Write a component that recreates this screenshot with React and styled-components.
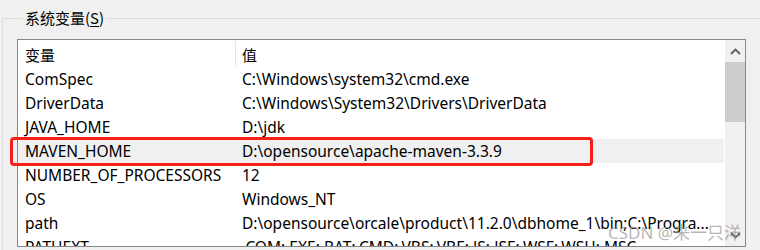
import React from "react";
import styled, { createGlobalStyle } from "styled-components";

const Global = createGlobalStyle`
  html, body { margin: 0; padding: 0; background: #f0f0f0; overflow: hidden; }
  body { font-family: "Noto Sans", "Noto Sans CJK SC", sans-serif; }
`;

const Page = styled.div`
  position: relative;
  width: 760px;
  height: 250px;
  overflow: hidden;
  background: #f0f0f0;
`;

const Group = styled.fieldset`
  margin: 0 0 0 2px;
  padding: 0 0 0 14px;
  border: 1px solid #dcdcdc;
  border-right: none;
  border-bottom: none;
  height: 260px;
  position: relative;
  top: 8px;
`;

const Legend = styled.legend`
  margin-left: 6px;
  padding: 0 2px;
  font-family: "Noto Sans CJK SC", sans-serif;
  font-size: 15px;
  line-height: 20px;
  color: #000;
  u { text-decoration: underline; text-underline-offset: 2px; }
`;

const ListBox = styled.div`
  margin-top: 11px;
  width: 727px;
  height: 206px;
  border: 1px solid #828790;
  background: #fff;
  display: flex;
  overflow: hidden;
`;

const Table = styled.div`
  flex: 1;
  display: flex;
  flex-direction: column;
  padding-right: 1px;
`;

const Header = styled.div`
  display: grid;
  grid-template-columns: 217px 1px 1fr;
  height: 27px;
  align-items: center;
  flex-shrink: 0;
`;

const HeadCell = styled.div`
  font-family: "Noto Sans CJK SC", sans-serif;
  font-size: 15px;
  padding-left: ${(p) => p.$pad}px;
  color: #000;
  padding-top: 2px;
`;

const Divider = styled.div`
  align-self: stretch;
  margin: 1px 0 1px;
  background: #e5e5e5;
`;

const Row = styled.div`
  display: grid;
  grid-template-columns: 218px 1fr;
  height: 24px;
  flex-shrink: 0;
  align-items: center;
  background: ${(p) => (p.$selected ? "#f0f0f0" : "transparent")};
`;

const Cell = styled.div`
  font-size: 15.5px;
  color: #000;
  white-space: nowrap;
  overflow: hidden;
  padding-left: ${(p) => p.$pad}px;
`;

const ScrollBar = styled.div`
  width: 20px;
  background: #f0f0f0;
  display: flex;
  flex-direction: column;
  flex-shrink: 0;
`;

const ArrowBtn = styled.div`
  height: 22px;
  display: flex;
  align-items: center;
  justify-content: center;
  flex-shrink: 0;
`;

const Thumb = styled.div`
  height: 60px;
  background: #cdcdcd;
  flex-shrink: 0;
`;

const Track = styled.div`
  flex: 1;
`;

const Highlight = styled.div`
  position: absolute;
  left: 10px;
  top: 137px;
  width: 577px;
  height: 23px;
  border: 3px solid #f5201a;
  border-radius: 4px;
  pointer-events: none;
`;

const Watermark = styled.div`
  position: absolute;
  left: 608px;
  top: 219px;
  font-family: "Noto Sans", "Noto Sans CJK SC", sans-serif;
  font-size: 17px;
  color: rgba(150, 150, 150, 0.7);
  white-space: nowrap;
  pointer-events: none;
`;

const rows = [
  ["ComSpec", "C:\\Windows\\system32\\cmd.exe"],
  ["DriverData", "C:\\Windows\\System32\\Drivers\\DriverData"],
  ["JAVA_HOME", "D:\\jdk"],
  ["MAVEN_HOME", "D:\\opensource\\apache-maven-3.3.9"],
  ["NUMBER_OF_PROCESSORS", "12"],
  ["OS", "Windows_NT"],
  ["path", "D:\\opensource\\orcale\\product\\11.2.0\\dbhome_1\\bin;C:\\Progra..."],
  ["PATHEXT", ".COM;.EXE;.BAT;.CMD;.VBS;.VBE;.JS;.JSE;.WSF;.WSH;.MSC"],
];

const Chevron = ({ down }) => (
  <svg width="11" height="7" viewBox="0 0 11 7">
    <path
      d={down ? "M1 1 L5.5 5.5 L10 1" : "M1 6 L5.5 1.5 L10 6"}
      fill="none"
      stroke="#606060"
      strokeWidth="1.8"
    />
  </svg>
);

export default function App() {
  return (
    <Page>
      <Global />
      <Group>
        <Legend>
          系统变量(<u>S</u>)
        </Legend>
        <ListBox>
          <Table>
            <Header>
              <HeadCell $pad={7}>变量</HeadCell>
              <Divider />
              <HeadCell $pad={6}>值</HeadCell>
            </Header>
            {rows.map(([k, v]) => (
              <Row key={k} $selected={k === "MAVEN_HOME"}>
                <Cell $pad={7}>{k}</Cell>
                <Cell $pad={6}>{v}</Cell>
              </Row>
            ))}
          </Table>
          <ScrollBar>
            <ArrowBtn>
              <Chevron />
            </ArrowBtn>
            <Thumb />
            <Track />
            <ArrowBtn>
              <Chevron down />
            </ArrowBtn>
          </ScrollBar>
        </ListBox>
      </Group>
      <Highlight />
      <Watermark>CSDN @来一只洋</Watermark>
    </Page>
  );
}
